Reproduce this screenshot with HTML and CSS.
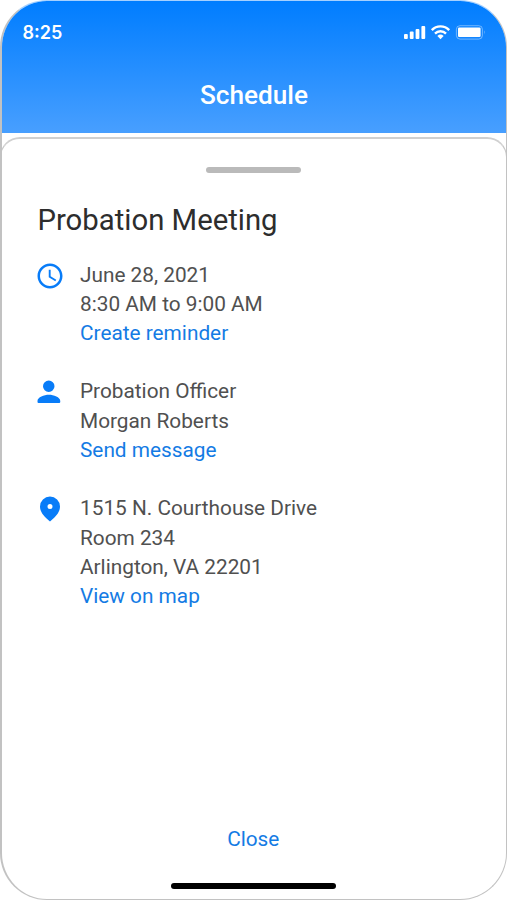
FILE: index.html
```html
<!DOCTYPE html>
<html lang="en">
<head>
<meta charset="utf-8">
<title>Schedule</title>
<link rel="stylesheet" href="styles.css">
</head>
<body>
<main class="phone">
  <header class="header">
    <div class="status">
      <span class="time">8:25</span>
      <svg class="indicators" width="82" height="16" viewBox="0 0 82 16" fill="#fff">
        <rect x="0" y="10" width="3.8" height="5" rx="1"/>
        <rect x="5.8" y="7.6" width="3.8" height="7.4" rx="1"/>
        <rect x="11.6" y="5" width="3.8" height="10" rx="1"/>
        <rect x="17.4" y="2" width="3.8" height="13" rx="1"/>
        <g fill="none" stroke="#fff" stroke-width="2.4">
          <path d="M27.8 6.1a12 12 0 0 1 17.4 0"/>
          <path d="M31 9.6a7.7 7.7 0 0 1 11 0"/>
        </g>
        <path d="M33.4 12a4.6 4.6 0 0 1 6.2 0l-3.1 3.2z"/>
        <rect x="52.4" y="1.7" width="26" height="13.4" rx="3.6" fill="none" stroke="#fff" stroke-opacity=".4"/>
        <rect x="54" y="3.6" width="22.6" height="9.4" rx="1.2"/>
        <path d="M80 6.2q1.6 2.1 0 4.2z" fill-opacity=".45"/>
      </svg>
    </div>
    <h1 class="title">Schedule</h1>
  </header>
  <section class="sheet">
    <div class="handle"></div>
    <h2 class="heading">Probation Meeting</h2>
    <div class="item">
      <svg class="icon" width="30" height="30" viewBox="0 0 24 24"><path d="M11.99 2C6.47 2 2 6.48 2 12s4.47 10 9.99 10C17.52 22 22 17.52 22 12S17.52 2 11.99 2zM12 20c-4.42 0-8-3.58-8-8s3.58-8 8-8 8 3.58 8 8-3.58 8-8 8zm.5-13H11v6l5.25 3.15.75-1.23-4.5-2.67z"/></svg>
      <div class="lines">
        <p>June 28, 2021</p>
        <p>8:30 AM to 9:00 AM</p>
        <a class="link">Create reminder</a>
      </div>
    </div>
    <div class="item">
      <svg class="icon" width="30" height="30" viewBox="0 0 24 24"><path d="M11 12a4.6 4.6 0 1 0 0-9.2 4.600 4.600 0 0 0 0 9.200zM2 19.100c0-3.100 5.300-5 9.100-5s9.100 1.900 9.100 5v.9q0 .8-.8.8H2.800q-.8 0-.8-.8z"/></svg>
      <div class="lines">
        <p>Probation Officer</p>
        <p>Morgan Roberts</p>
        <a class="link">Send message</a>
      </div>
    </div>
    <div class="item">
      <svg class="icon" width="30" height="30" viewBox="0 0 24 24"><path fill-rule="evenodd" d="M12 2a8 8 0 0 0-8 8c0 5 4 8.6 8 12 4-3.4 8-7 8-12a8 8 0 0 0-8-8zm0 10a2 2 0 1 1 0-4 2 2 0 0 1 0 4z"/></svg>
      <div class="lines">
        <p>1515 N. Courthouse Drive</p>
        <p>Room 234</p>
        <p>Arlington, VA 22201</p>
        <a class="link">View on map</a>
      </div>
    </div>
    <a class="link close">Close</a>
    <div class="home"></div>
  </section>
</main>
</body>
</html>
```
FILE: styles.css
```css
* { box-sizing: border-box; }
body { margin: 0; background: #fff; font-family: Roboto, sans-serif; }
h1, h2, p { margin: 0; font-weight: 400; }

.phone {
  width: 507px;
  height: 900px;
  border: 1px solid #c2c2c2;
  border-top-color: #a5d0ff;
  border-left-width: 2px;
  border-radius: 47px;
  display: flex;
  flex-direction: column;
  overflow: hidden;
}
.header {
  height: 132px;
  flex: none;
  background: linear-gradient(#007dff, #489fff);
  color: #fff;
}
.status {
  display: flex;
  justify-content: space-between;
  align-items: center;
  height: 26px;
  margin-top: 18px;
  padding: 0 20px 0 20.5px;
}
.time { font: 600 18px/26px Inter, sans-serif; padding-top: 1px; }
.title {
  margin-top: 33px;
  font-size: 26.2px;
  line-height: 34px;
  font-weight: 500;
  text-align: center;
}
.sheet {
  flex: 1;
  margin: 4px -1px 0 -2px;
  border: 1px solid #c8c8c8;
  border-top: 2px solid #d0d0d0;
  border-bottom: 0;
  border-radius: 20px 20px 0 0;
  display: flex;
  flex-direction: column;
  padding: 28px 34px 0 36.5px;
  color: #505050;
}
.handle {
  width: 95px;
  height: 6px;
  border-radius: 3px;
  background: #bababa;
  align-self: center;
  margin-left: -3px;
  flex: none;
}
.heading {
  margin-top: 27px;
  font-size: 29.3px;
  line-height: 40px;
  color: #2d2d2d;
}
.item { display: flex; margin-top: 29px; }
.heading + .item { margin-top: 20.6px; }
.icon { flex: none; margin: 0 15.5px 0 -3px; fill: #087cf8; }
.lines { font-size: 20.8px; line-height: 29.3px; }
.link { display: block; color: #147be4; }
.close {
  align-self: center;
  margin-top: auto;
  margin-left: -3px;
  font-size: 20.8px;
  line-height: 30px;
}
.home {
  width: 165px;
  height: 6px;
  border-radius: 3px;
  background: #000;
  align-self: center;
  margin: 29px 0 10px -3px;
  flex: none;
}
```
